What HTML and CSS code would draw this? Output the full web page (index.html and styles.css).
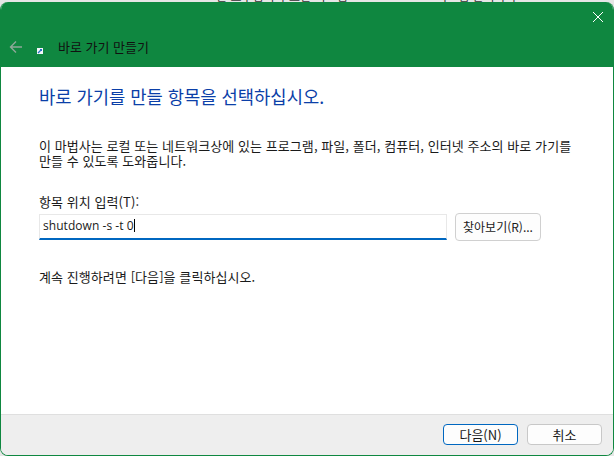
FILE: index.html
```html
<!DOCTYPE html>
<html lang="ko">
<head>
<meta charset="utf-8">
<title>바로 가기 만들기</title>
<link rel="stylesheet" href="styles.css">
</head>
<body>
<div class="backdrop">
  <span class="peek peek-a">관 도구입니다 또한 시스템</span>
  <span class="peek peek-b">시스템 관리자가</span>
</div>
<div class="window">
  <header class="header">
    <div class="titlebar">
      <svg class="close" width="10" height="10" viewBox="0 0 10 10"><path d="M0 0L10 10M10 0L0 10" stroke="#fff" stroke-width="1" fill="none"/></svg>
    </div>
    <div class="navrow">
      <svg class="back" width="14" height="14" viewBox="0 0 14 14"><path d="M13 7H2M7 1.5L1.5 7L7 12.5" stroke="#8fa898" stroke-width="1.4" fill="none"/></svg>
      <svg class="appicon" width="6" height="6" viewBox="0 0 6 6"><rect width="6" height="6" fill="#f4f6fa"/><path d="M1 5L4 2" stroke="#2a6fc4" stroke-width="1.2"/><rect x="3" y="1" width="2" height="2" fill="#2a6fc4"/></svg>
      <span class="wintitle">바로 가기 만들기</span>
    </div>
  </header>
  <main class="body">
    <h1 class="heading">바로 가기를 만들 항목을 선택하십시오.</h1>
    <p class="desc">이 마법사는 로컬 또는 네트워크상에 있는 프로그램, 파일, 폴더, 컴퓨터, 인터넷 주소의 바로 가기를<br>만들 수 있도록 도와줍니다.</p>
    <label class="label" for="loc">항목 위치 입력(T):</label>
    <div class="inputrow">
      <div class="input" id="loc"><span>shutdown -s -t 0</span><i class="caret"></i></div>
      <button class="btn browse">찾아보기(R)...</button>
    </div>
    <p class="hint">계속 진행하려면 [다음]을 클릭하십시오.</p>
  </main>
  <footer class="footer">
    <button class="btn primary">다음(N)</button>
    <button class="btn cancel">취소</button>
  </footer>
</div>
</body>
</html>
```
FILE: styles.css
```css
html, body { margin: 0; padding: 0; }
body {
  width: 614px;
  height: 456px;
  overflow: hidden;
  background: #e6e6e6;
  font-family: "Noto Sans CJK KR", "Open Sans", sans-serif;
  font-size: 13px;
  color: #1a1a1a;
  display: flex;
  flex-direction: column;
  position: relative;
}
.backdrop { height: 2px; flex: none; overflow: hidden; position: relative; }
.peek { position: absolute; top: -11px; font-size: 12px; line-height: 14px; color: #333; white-space: nowrap; }
.peek-a { left: 216px; }
.peek-b { left: 436px; }
.window {
  flex: 1;
  display: flex;
  flex-direction: column;
  background: #fff;
  border: 1px solid #0f8740;
  border-top: 0;
  border-radius: 8px;
  overflow: hidden;
  min-height: 0;
}
.header { background: #0f8740; height: 65px; flex: none; display: flex; flex-direction: column; }
.titlebar { height: 30px; display: flex; justify-content: flex-end; align-items: flex-start; padding: 10px 10px 0 0; box-sizing: border-box; }
.navrow { display: flex; align-items: center; height: 30px; }
.back { margin-left: 8px; }
.appicon { margin-left: 14px; margin-top: 8px; }
.wintitle { margin-left: 15px; font-size: 13px; color: #111; line-height: 16px; margin-top: -1px; }
.body { flex: 1; padding: 0 0 0 38px; display: flex; flex-direction: column; }
.heading { margin: 18px 0 0; font-size: 17.7px; font-weight: 400; line-height: 22px; color: #0b3fa8; }
.desc { margin: 31px 0 0; line-height: 15px; letter-spacing: 0.07px; }
.label { margin-top: 26px; line-height: 16px; letter-spacing: 0.07px; }
.inputrow { display: flex; align-items: flex-start; margin-top: 4px; }
.input {
  width: 408px;
  height: 26px;
  box-sizing: border-box;
  background: #fff;
  border: 1px solid #e8e8e8;
  border-bottom: 2px solid #0067c0;
  padding: 0 0 3px 3px;
  display: flex;
  align-items: center;
  font-family: "Open Sans", sans-serif;
  font-size: 12px;
  letter-spacing: 0.05px;
}
.caret { display: inline-block; width: 1px; height: 13px; background: #000; margin-left: 0; }
.btn {
  box-sizing: border-box;
  font-family: inherit;
  font-size: 13px;
  color: #1a1a1a;
  background: #fdfdfd;
  border: 1px solid #d0d0d0;
  border-radius: 4px;
  padding: 0 0 2px;
  height: 28px;
}
.browse { width: 86px; margin-left: 8px; height: 28px; margin-top: -1px; font-size: 12px; }
.hint { margin: 28px 0 0; line-height: 16px; letter-spacing: 0.07px; }
.footer {
  height: 41px;
  flex: none;
  box-sizing: border-box;
  background: #eeeeee;
  border-top: 1px solid #dfdfdf;
  display: flex;
  justify-content: flex-end;
  gap: 9px;
  padding: 9px 11px 0 0;
}
.footer .btn { width: 75px; height: 21px; padding: 0; }
.primary { border-color: #0067c0; }
.cancel { border-color: #c8c8c8; }
```
